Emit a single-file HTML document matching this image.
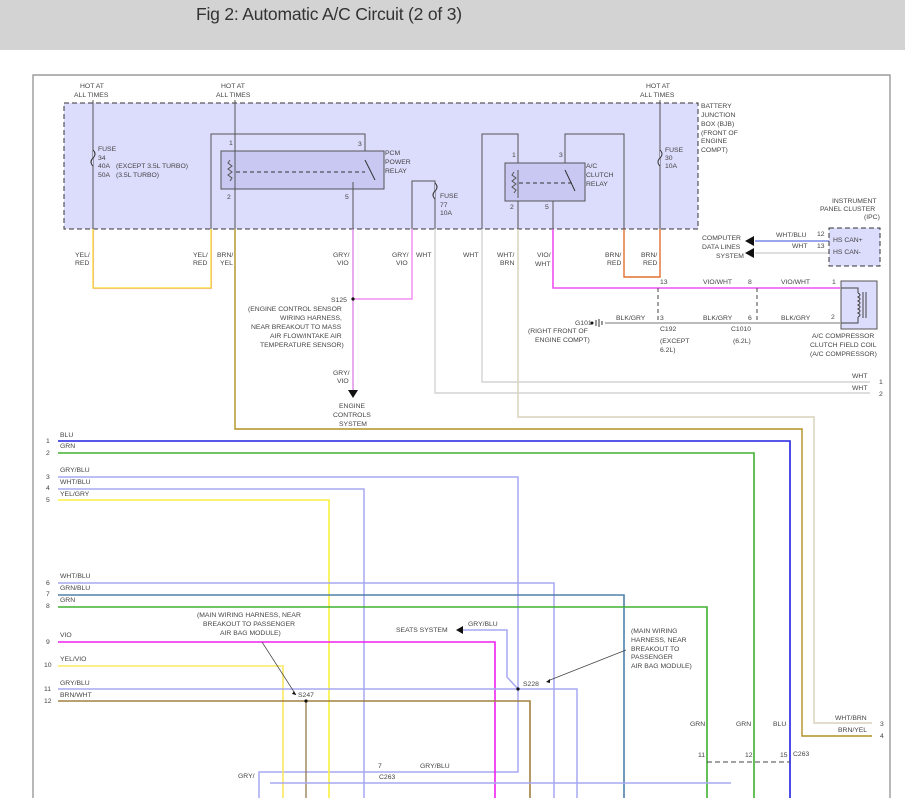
<!DOCTYPE html>
<html><head><meta charset="utf-8"><style>
body{margin:0;background:#fff;width:905px;height:798px;overflow:hidden;font-family:"Liberation Sans",sans-serif}
.hd{position:absolute;left:0;top:0;width:905px;height:50px;background:#d3d3d3}
.hd span{position:absolute;left:196px;top:4px;font-size:17.5px;color:#333;letter-spacing:-0.2px}
svg{position:absolute;left:0;top:0}
text{font-family:"Liberation Sans",sans-serif;font-size:6.8px;fill:#444}
</style></head><body>
<div class="hd"><span>Fig 2: Automatic A/C Circuit (2 of 3)</span></div>
<svg width="905" height="798" viewBox="0 0 905 798">
<g fill="none">
<!-- frame -->
<path d="M33 798V75H890V798" stroke="#888" stroke-width="1.2"/>
<!-- BJB -->
<rect x="64" y="103" width="634" height="126" fill="#dcdcfc" stroke="#333" stroke-dasharray="5,3"/>
<rect x="221" y="151" width="163" height="38" fill="#c8c8f2" stroke="#555"/>
<rect x="505" y="163" width="80" height="38" fill="#c8c8f2" stroke="#555"/>
<!-- dark wires inside -->
<g stroke="#555" stroke-width="1">
<path d="M93 100V229"/><path d="M235 100V229"/>
<path d="M211 229V134H365V151"/>
<path d="M353 182V229"/>
<path d="M412 229V181H435V229"/>
<path d="M482 229V134H518V163"/>
<path d="M518 201V229"/>
<path d="M553 201V229"/>
<path d="M565 163V134H624V229"/>
<path d="M660 100V229"/>
<path d="M230 160l-2 3 4 3-4 3 4 3-4 3 4 3-2 3"/>
<path d="M514 172l-2 3 4 3-4 3 4 3-4 3 4 3-2 3"/>
<path d="M235 158V186M518 170V198"/>
</g>
<path d="M236 172H365M519 183H574" stroke="#333" stroke-dasharray="4,3"/>
<path d="M365 160L375 180M565 170L575 191" stroke="#333"/>
<!-- fuse marks -->
<path d="M93 150q4 4 0 8q-4 4 0 8M435 183q4 4 0 8q-4 4 0 8M660 150q4 4 0 8q-4 4 0 8" stroke="#333" fill="#dcdcfc"/>
<!-- colored wires -->
<path d="M93 229V288H211V229" stroke="#f8e040" stroke-width="1.5"/>
<path d="M93 229V288H211V229" stroke="#f0a0a0" stroke-width="0.5" transform="translate(0.8,0.8)"/>
<path d="M235 229V429H802V736H872" stroke="#b09020" stroke-width="1.4"/>
<path d="M353 229V390" stroke="#e090e8" stroke-width="1.5"/>
<path d="M353 299H412V229" stroke="#f090f0" stroke-width="1.5"/>
<path d="M435 229V393H870" stroke="#d4d4d4" stroke-width="1.4"/>
<path d="M482 229V382H870" stroke="#d4d4d4" stroke-width="1.4"/>
<path d="M518 229V417H814V723H872" stroke="#d8d0b8" stroke-width="1.4"/>
<path d="M624 229V277H660V229" stroke="#e07030" stroke-width="1.4"/>
<path d="M553 229V288H840" stroke="#f050f0" stroke-width="1.6"/>
<path d="M605 323H840" stroke="#777" stroke-width="1"/>
<path d="M658 288V323M757 288V323" stroke="#444" stroke-dasharray="4,3"/>
<path d="M755 241H829" stroke="#6070e0" stroke-width="1.2"/>
<path d="M755 253H829" stroke="#ccc" stroke-width="1.2"/>
<rect x="829" y="228" width="51" height="38" fill="#dcdcfc" stroke="#333" stroke-dasharray="5,3"/>
<rect x="841" y="281" width="36" height="48" fill="#dcdcfc" stroke="#555"/>
<path d="M841 288H858V293M841 323H858V317M858 293q4 2 0 4q4 2 0 4q4 2 0 4q4 2 0 4q4 2 0 4q4 2 0 4M863 292V318M866 292V318" stroke="#444"/>
<path d="M599 319V327M602 321V325M596 320V326" stroke="#333"/>
<!-- lower harness -->
<path d="M58 441H790V798" stroke="#2020e0" stroke-width="1.6"/>
<path d="M58 453H754V798" stroke="#40b030" stroke-width="1.6"/>
<path d="M58 477H518V772H259V798" stroke="#a8a8f4" stroke-width="1.5"/>
<path d="M58 489H364V798" stroke="#a8a8f4" stroke-width="1.5"/>
<path d="M58 500H329V798" stroke="#f8f040" stroke-width="1.6"/>
<path d="M58 583H554V798" stroke="#a8a8f4" stroke-width="1.5"/>
<path d="M58 595H624V798" stroke="#5080a8" stroke-width="1.6"/>
<path d="M58 607H707V798" stroke="#40b030" stroke-width="1.6"/>
<path d="M58 642H495V798" stroke="#f020f0" stroke-width="1.6"/>
<path d="M58 666H283V798" stroke="#f8e860" stroke-width="1.6"/>
<path d="M58 689H577V798" stroke="#a8a8f4" stroke-width="1.5"/>
<path d="M58 701H530V798" stroke="#a08040" stroke-width="1.6"/>
<path d="M306 701V798" stroke="#8a7040" stroke-width="1.2"/>
<path d="M270 783H731" stroke="#a8a8f4" stroke-width="1.5"/>
<path d="M518 689L507 677V630H462" stroke="#a8a8f4" stroke-width="1.5"/>
<path d="M707 762H790" stroke="#444" stroke-dasharray="5,3"/>
<path d="M262 642L296 695M626 650L550 680" stroke="#444" stroke-width="0.7"/>
</g>
<g fill="#111">
<path d="M348 390h10l-5 8z"/><path d="M456 630l7-4v8z"/>
<path d="M745 241l9-5v10zM745 253l9-5v10z"/>
<path d="M296 695l-4-1 2-3z"/><path d="M546 682l4-3 0 4z"/>
<circle cx="353" cy="299" r="1.6"/><circle cx="306" cy="701" r="1.6"/><circle cx="518" cy="689" r="1.6"/><circle cx="592" cy="323" r="1.5"/>
</g>
<g>
<text x="80" y="88">HOT AT</text><text x="74" y="97">ALL TIMES</text>
<text x="221" y="88">HOT AT</text><text x="216" y="97">ALL TIMES</text>
<text x="646" y="88">HOT AT</text><text x="640" y="97">ALL TIMES</text>
<text x="98" y="151">FUSE</text><text x="98" y="160">34</text><text x="98" y="168">40A</text><text x="116" y="168">(EXCEPT 3.5L TURBO)</text><text x="98" y="177">50A</text><text x="116" y="177">(3.5L TURBO)</text>
<text x="229" y="145">1</text><text x="358" y="146">3</text><text x="227" y="199">2</text><text x="345" y="199">5</text>
<text x="385" y="155">PCM</text><text x="385" y="164">POWER</text><text x="385" y="173">RELAY</text>
<text x="440" y="198">FUSE</text><text x="440" y="207">77</text><text x="440" y="215">10A</text>
<text x="512" y="157">1</text><text x="559" y="157">3</text><text x="510" y="209">2</text><text x="545" y="209">5</text>
<text x="586" y="168">A/C</text><text x="586" y="177">CLUTCH</text><text x="586" y="186">RELAY</text>
<text x="665" y="152">FUSE</text><text x="665" y="160">30</text><text x="665" y="168">10A</text>
<text x="701" y="108">BATTERY</text><text x="701" y="117">JUNCTION</text><text x="701" y="126">BOX (BJB)</text><text x="701" y="135">(FRONT OF</text><text x="701" y="143">ENGINE</text><text x="701" y="152">COMPT)</text>
<text x="75" y="257">YEL/</text><text x="75" y="265">RED</text><text x="193" y="257">YEL/</text><text x="193" y="265">RED</text><text x="217" y="257">BRN/</text><text x="220" y="265">YEL</text>
<text x="333" y="257">GRY/</text><text x="337" y="265">VIO</text><text x="392" y="257">GRY/</text><text x="396" y="265">VIO</text><text x="416" y="257">WHT</text><text x="463" y="257">WHT</text>
<text x="497" y="257">WHT/</text><text x="500" y="265">BRN</text><text x="537" y="257">VIO/</text><text x="535" y="266">WHT</text>
<text x="605" y="257">BRN/</text><text x="607" y="265">RED</text><text x="641" y="257">BRN/</text><text x="643" y="265">RED</text>
<text x="331" y="302">S125</text>
<text x="248" y="311">(ENGINE CONTROL SENSOR</text><text x="280" y="320">WIRING HARNESS,</text><text x="251" y="329">NEAR BREAKOUT TO MASS</text><text x="270" y="338">AIR FLOW/INTAKE AIR</text><text x="260" y="347">TEMPERATURE SENSOR)</text>
<text x="333" y="375">GRY/</text><text x="337" y="383">VIO</text>
<text x="339" y="408">ENGINE</text><text x="333" y="417">CONTROLS</text><text x="339" y="426">SYSTEM</text>
<text x="832" y="203">INSTRUMENT</text><text x="820" y="211">PANEL CLUSTER</text><text x="864" y="219">(IPC)</text>
<text x="702" y="240">COMPUTER</text><text x="702" y="249">DATA LINES</text><text x="716" y="258">SYSTEM</text>
<text x="776" y="237">WHT/BLU</text><text x="792" y="248">WHT</text><text x="817" y="236">12</text><text x="817" y="248">13</text>
<text x="833" y="242">HS CAN+</text><text x="833" y="254">HS CAN-</text>
<text x="660" y="284">13</text><text x="703" y="284">VIO/WHT</text><text x="748" y="284">8</text><text x="781" y="284">VIO/WHT</text><text x="832" y="284">1</text>
<text x="575" y="325">G101</text><text x="528" y="333">(RIGHT FRONT OF</text><text x="535" y="342">ENGINE COMPT)</text>
<text x="616" y="320">BLK/GRY</text><text x="660" y="320">3</text><text x="703" y="320">BLK/GRY</text><text x="748" y="320">6</text><text x="781" y="320">BLK/GRY</text><text x="831" y="319">2</text>
<text x="660" y="331">C192</text><text x="731" y="331">C1010</text><text x="660" y="343">(EXCEPT</text><text x="660" y="352">6.2L)</text><text x="733" y="343">(6.2L)</text>
<text x="812" y="338">A/C COMPRESSOR</text><text x="810" y="347">CLUTCH FIELD COIL</text><text x="810" y="356">(A/C COMPRESSOR)</text>
<text x="852" y="378">WHT</text><text x="879" y="384">1</text><text x="852" y="390">WHT</text><text x="879" y="396">2</text>
<text x="835" y="720">WHT/BRN</text><text x="880" y="726">3</text><text x="838" y="732">BRN/YEL</text><text x="880" y="738">4</text>
<text x="60" y="437">BLU</text><text x="46" y="443">1</text><text x="60" y="448">GRN</text><text x="46" y="455">2</text>
<text x="60" y="472">GRY/BLU</text><text x="46" y="479">3</text><text x="60" y="484">WHT/BLU</text><text x="46" y="490">4</text><text x="60" y="496">YEL/GRY</text><text x="46" y="502">5</text>
<text x="60" y="578">WHT/BLU</text><text x="46" y="585">6</text><text x="60" y="590">GRN/BLU</text><text x="46" y="596">7</text><text x="60" y="602">GRN</text><text x="46" y="608">8</text>
<text x="60" y="637">VIO</text><text x="46" y="644">9</text><text x="60" y="661">YEL/VIO</text><text x="44" y="667">10</text>
<text x="60" y="685">GRY/BLU</text><text x="44" y="691">11</text><text x="60" y="697">BRN/WHT</text><text x="44" y="703">12</text>
<text x="197" y="617">(MAIN WIRING HARNESS, NEAR</text><text x="203" y="626">BREAKOUT TO PASSENGER</text><text x="220" y="635">AIR BAG MODULE)</text>
<text x="298" y="697">S247</text><text x="523" y="686">S228</text>
<text x="396" y="632">SEATS SYSTEM</text><text x="468" y="626">GRY/BLU</text>
<text x="631" y="633">(MAIN WIRING</text><text x="631" y="642">HARNESS, NEAR</text><text x="631" y="651">BREAKOUT TO</text><text x="631" y="659">PASSENGER</text><text x="631" y="668">AIR BAG MODULE)</text>
<text x="690" y="726">GRN</text><text x="736" y="726">GRN</text><text x="773" y="726">BLU</text>
<text x="698" y="757">11</text><text x="745" y="757">12</text><text x="780" y="757">15</text><text x="793" y="756">C263</text>
<text x="378" y="768">7</text><text x="379" y="779">C263</text><text x="420" y="768">GRY/BLU</text><text x="238" y="778">GRY/</text>
</g>
</svg>
</body></html>
